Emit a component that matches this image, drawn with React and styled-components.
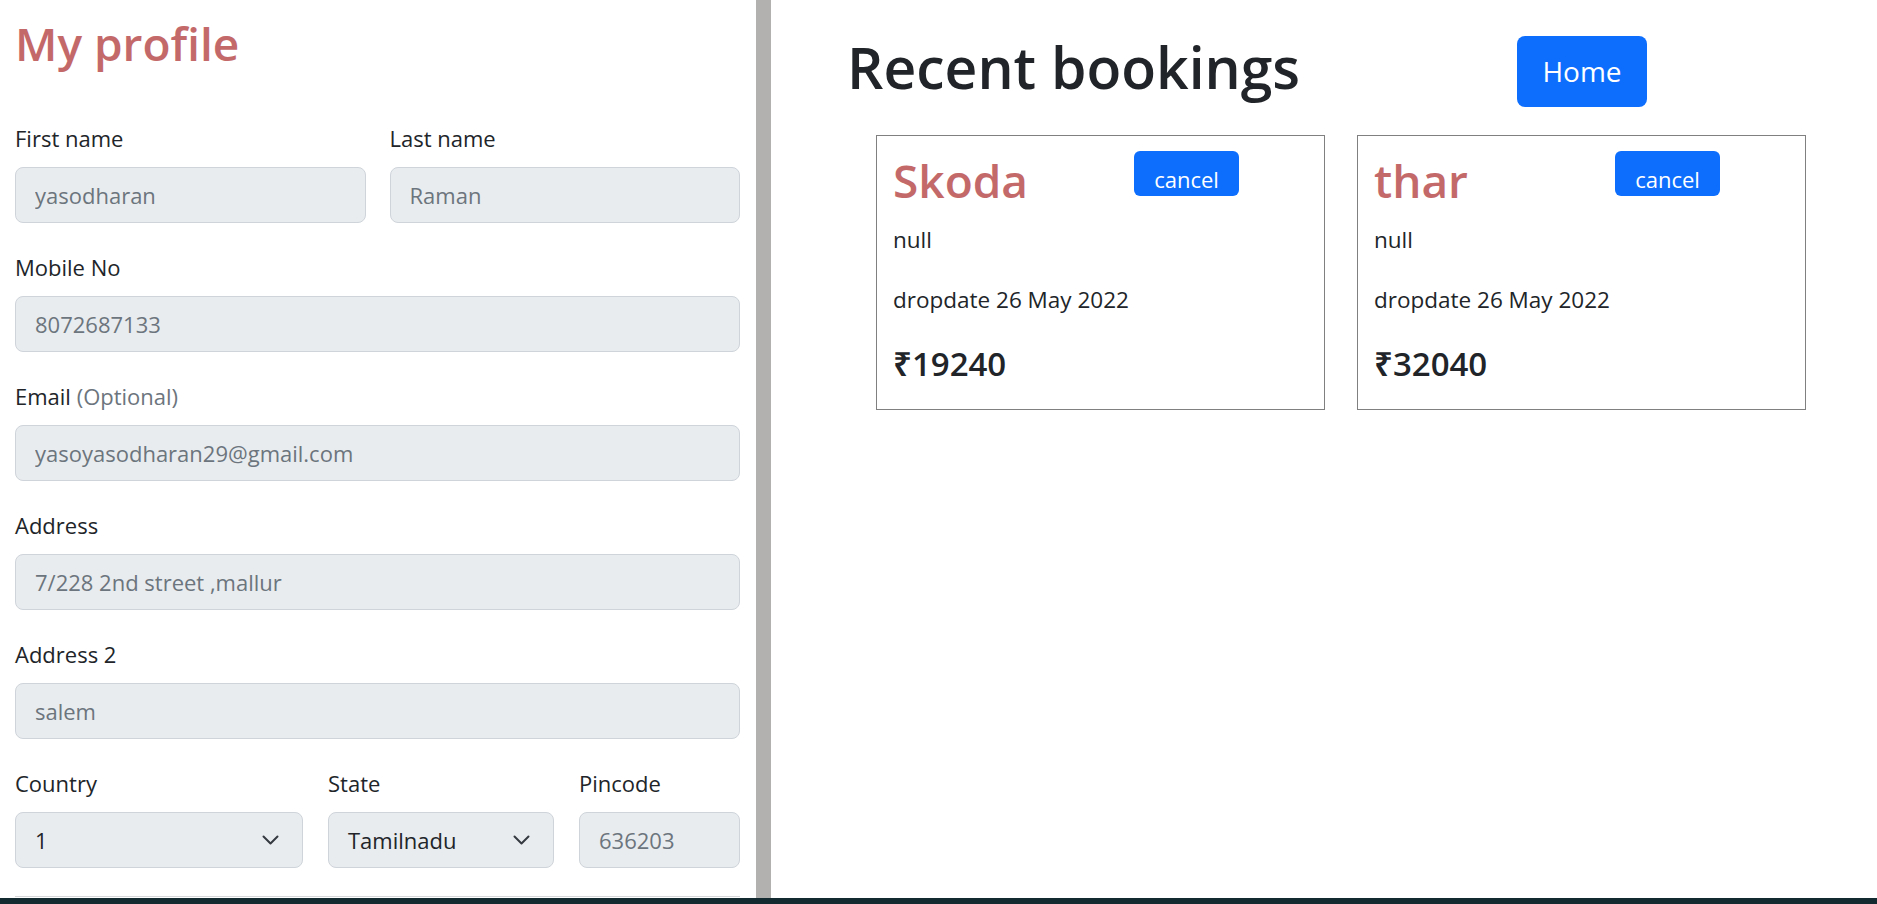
import styled, { createGlobalStyle } from 'styled-components';

const GlobalStyle = createGlobalStyle`
  * {
    box-sizing: border-box;
  }
  body {
    margin: 0;
    background: #fff;
    color: #212529;
    font-family: "Open Sans", "Noto Sans", sans-serif;
  }
`;

const Page = styled.div`
  display: flex;
  flex-direction: column;
  height: 904px;
  overflow: hidden;
`;

const Main = styled.div`
  display: flex;
  height: 898px;
`;

const Footer = styled.div`
  flex: 1;
  background: #132a31;
`;

const ProfilePanel = styled.div`
  width: 756px;
  flex-shrink: 0;
  padding: 16px 16px 0 15px;
  overflow: hidden;
`;

const Divider = styled.div`
  width: 15px;
  flex-shrink: 0;
  background: #b3b0b0;
`;

const PinkTitle = styled.h1`
  margin: ${(p) => p.$margin || '0'};
  font-size: 46px;
  font-weight: 600;
  line-height: 1.2;
  color: #c4696a;
`;

const Row = styled.div`
  display: grid;
  grid-template-columns: ${(p) => p.$cols};
  column-gap: ${(p) => p.$gap || '24px'};
  margin-bottom: 28px;
`;

const Field = styled.div`
  display: flex;
  flex-direction: column;
  min-width: 0;
`;

const Label = styled.label`
  font-size: 22px;
  line-height: 33px;
  margin-bottom: 12px;
  color: #212529;
`;

const Muted = styled.span`
  color: #6c757d;
`;

const Input = styled.input`
  width: 100%;
  height: 56px;
  padding: 0 19px;
  font-family: inherit;
  font-size: 22px;
  color: #6c757d;
  background: #e9ecef;
  border: 1px solid #ced4da;
  border-radius: 8px;
  outline: none;

  &::placeholder {
    color: #6c757d;
    opacity: 1;
  }
`;

const SelectBox = styled.div`
  display: flex;
  align-items: center;
  justify-content: space-between;
  height: 56px;
  padding: 0 23px 0 19px;
  font-size: 22px;
  color: #212529;
  background: #e9ecef;
  border: 1px solid #ced4da;
  border-radius: 8px;
`;

const Rule = styled.hr`
  margin: 24px 0 0;
  border: none;
  border-top: 1px solid #d5d7d9;
`;

const BookingsPanel = styled.div`
  flex: 1;
  padding: 33px 0 0 76px;
`;

const Header = styled.div`
  display: grid;
  grid-template-columns: 670px auto;
  align-items: start;
`;

const Heading = styled.h1`
  margin: 0;
  font-size: 57px;
  font-weight: 600;
  line-height: 1.2;
  color: #212529;
`;

const BlueButton = styled.button`
  width: ${(p) => p.$w};
  height: ${(p) => p.$h};
  margin-top: ${(p) => p.$top || '0'};
  padding: ${(p) => p.$pad || '0'};
  font-family: inherit;
  font-size: ${(p) => p.$size};
  line-height: ${(p) => p.$lh || '1.2'};
  color: #fff;
  background: #0d6efd;
  border: none;
  border-radius: ${(p) => p.$radius};
  cursor: pointer;
  display: flex;
  align-items: ${(p) => (p.$low ? 'flex-start' : 'center')};
  justify-content: center;
`;

const Cards = styled.div`
  display: flex;
  gap: 32px;
  margin: 28px 0 0 29px;
`;

const Card = styled.div`
  width: 449px;
  border: 1px solid #808080;
  padding: 15px 17px 26px 16px;
`;

const CardTop = styled.div`
  display: grid;
  grid-template-columns: 241px auto;
  align-items: start;
`;

const CardText = styled.p`
  margin: ${(p) => p.$margin};
  font-size: 22.5px;
  line-height: 33px;
`;

const Price = styled.h3`
  margin: 0;
  font-size: 33px;
  font-weight: 600;
  line-height: 38px;
`;

const Chevron = () => (
  <svg width="17" height="10" viewBox="0 0 17 10">
    <path d="M1.5 1.5 L8.5 8.5 L15.5 1.5" fill="none" stroke="#343a40" strokeWidth="2" strokeLinecap="round" strokeLinejoin="round" />
  </svg>
);

const bookings = [
  { car: 'Skoda', drop: '26 May 2022', price: '19240' },
  { car: 'thar', drop: '26 May 2022', price: '32040' },
];

function App() {
  return (
    <Page>
      <GlobalStyle />
      <Main>
        <ProfilePanel>
          <PinkTitle $margin="0 0 51px">My profile</PinkTitle>
          <Row $cols="1fr 1fr">
            <Field>
              <Label>First name</Label>
              <Input readOnly placeholder="yasodharan" />
            </Field>
            <Field>
              <Label>Last name</Label>
              <Input readOnly placeholder="Raman" />
            </Field>
          </Row>
          <Row $cols="1fr">
            <Field>
              <Label>Mobile No</Label>
              <Input readOnly placeholder="8072687133" />
            </Field>
          </Row>
          <Row $cols="1fr">
            <Field>
              <Label>
                Email <Muted>(Optional)</Muted>
              </Label>
              <Input readOnly placeholder="yasoyasodharan29@gmail.com" />
            </Field>
          </Row>
          <Row $cols="1fr">
            <Field>
              <Label>Address</Label>
              <Input readOnly placeholder="7/228 2nd street ,mallur" />
            </Field>
          </Row>
          <Row $cols="1fr">
            <Field>
              <Label>Address 2</Label>
              <Input readOnly placeholder="salem" />
            </Field>
          </Row>
          <Row $cols="288px 226px 1fr" $gap="25px">
            <Field>
              <Label>Country</Label>
              <SelectBox>
                1
                <Chevron />
              </SelectBox>
            </Field>
            <Field>
              <Label>State</Label>
              <SelectBox>
                Tamilnadu
                <Chevron />
              </SelectBox>
            </Field>
            <Field>
              <Label>Pincode</Label>
              <Input readOnly placeholder="636203" />
            </Field>
          </Row>
          <Rule />
        </ProfilePanel>
        <Divider />
        <BookingsPanel>
          <Header>
            <Heading>Recent bookings</Heading>
            <BlueButton $w="130px" $h="71px" $top="3px" $size="28px" $radius="8px">
              Home
            </BlueButton>
          </Header>
          <Cards>
            {bookings.map((b) => (
              <Card key={b.car}>
                <CardTop>
                  <PinkTitle $margin="2px 0 0">{b.car}</PinkTitle>
                  <BlueButton $w="105px" $h="45px" $pad="12px 0 0" $size="22px" $lh="33px" $radius="6px" $low>
                    cancel
                  </BlueButton>
                </CardTop>
                <CardText $margin="15px 0 27px">null</CardText>
                <CardText $margin="0 0 29px">dropdate {b.drop}</CardText>
                <Price>₹{b.price}</Price>
              </Card>
            ))}
          </Cards>
        </BookingsPanel>
      </Main>
      <Footer />
    </Page>
  );
}

export default App;
